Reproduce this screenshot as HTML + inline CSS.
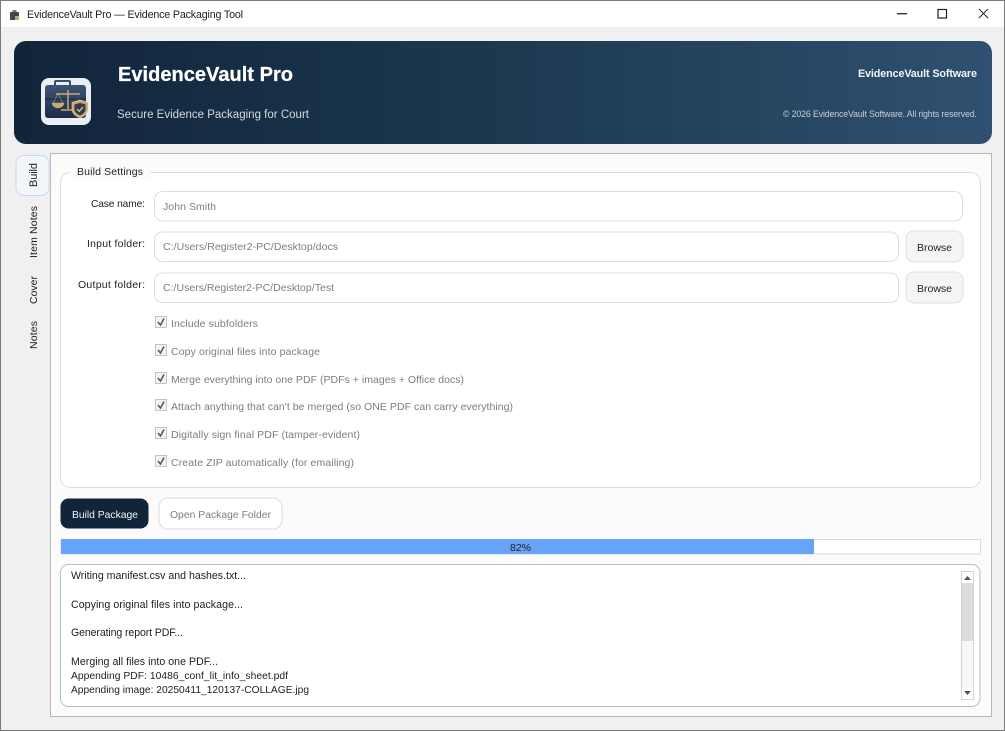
<!DOCTYPE html>
<html><head><meta charset="utf-8"><title>EvidenceVault Pro</title>
<style>
html,body{margin:0;padding:0;width:1005px;height:731px;overflow:hidden;background:#f0f0f0}
svg{display:block;filter:blur(.3px)}
text{font-family:"Liberation Sans",sans-serif;font-size:11px;fill:#222}
.g{fill:#7d7d7d}
.cb{fill:#f3f3f3;stroke:#c4c4c4}
.ck{fill:none;stroke:#5a5a5a;stroke-width:1.6}
.f{fill:#fff;stroke:#dedede}
.log{fill:#1e1e1e;font-size:10.6px}
</style></head><body>
<svg width="1005" height="731" viewBox="0 0 1005 731" xmlns="http://www.w3.org/2000/svg">
<defs>
<linearGradient id="hd" x1="0" x2="1" y1="0" y2="0"><stop offset="0" stop-color="#11243a"/><stop offset=".5" stop-color="#1c3950"/><stop offset="1" stop-color="#2f5070"/></linearGradient>
<linearGradient id="bc" x1="0" x2="0" y1="0" y2="1"><stop offset="0" stop-color="#3d5478"/><stop offset="1" stop-color="#1d2c48"/></linearGradient>
</defs>
<rect width="1005" height="731" fill="#f0f0f0"/>
<rect width="1005" height="27" fill="#fff"/>
<rect x="0.5" y="0.5" width="1004" height="730" fill="none" stroke="#7a7a7a"/>
<!-- title bar -->
<rect x="10" y="12" width="9" height="8" rx="1" fill="#3d4652"/><rect x="12.500" y="10" width="4" height="2" fill="#6b7480"/><rect x="15" y="16" width="4" height="4" fill="#b9a878"/>
<text x="27" y="18" textLength="216" style="font-size:10.700px">EvidenceVault Pro — Evidence Packaging Tool</text>
<rect x="897" y="13" width="10" height="1.400" fill="#333"/>
<rect x="938" y="9.500" width="8.500" height="8.500" fill="none" stroke="#222" stroke-width="1.200"/>
<path d="M979 9l9 9M988 9l-9 9" stroke="#333" stroke-width="1.100" fill="none"/>
<!-- header -->
<rect x="14" y="41" width="978" height="103" rx="12" fill="url(#hd)"/>
<rect x="41" y="78" width="50" height="47" rx="8" fill="#e9eff3"/>
<path d="M55 85v-3a1 1 0 0 1 1-1h13a1 1 0 0 1 1 1v3" fill="none" stroke="#3a4c6b" stroke-width="2"/>
<rect x="45" y="85" width="41" height="33" rx="3" fill="url(#bc)"/>
<path d="M45 99h41" stroke="#1c2a44" stroke-width="1"/>
<path d="M68 90v19M56 94h24M61 110h15" stroke="#c9a971" stroke-width="1.500" fill="none"/>
<path d="M52 103a6 5 0 0 0 12 0zM58 94l-5 9M58 94l5 9" fill="#c9a971" stroke="#c9a971" stroke-width=".5"/>
<path d="M80 100l8 2.500v6.500c0 4.500-3.500 7-8 9-4.500-2-8-4.500-8-9v-6.500z" fill="#c9a662" stroke="#f0e0b0" stroke-width=".6"/>
<path d="M80 103l5.500 1.500v4.500c0 3-2.500 5-5.500 6.500-3-1.500-5.500-3.500-5.500-6.500v-4.500z" fill="#2b3b52"/>
<path d="M77 109l2.200 2.300 3.800-4.300" stroke="#d9bb7e" stroke-width="1.400" fill="none"/>
<text x="118" y="81" textLength="175" style="font-size:20px;font-weight:bold;fill:#fff;stroke:#fff;stroke-width:.25">EvidenceVault Pro</text>
<text x="117" y="118" textLength="192" style="font-size:11.500px;fill:#d3dbe2">Secure Evidence Packaging for Court</text>
<text x="858" y="77" textLength="119" style="font-size:10.800px;font-weight:bold;fill:#f0f4f7">EvidenceVault Software</text>
<text x="783" y="117" textLength="194" style="font-size:8.800px;fill:#c3ced8">© 2026 EvidenceVault Software. All rights reserved.</text>
<!-- side tabs -->
<rect x="50.500" y="153.500" width="941" height="563" fill="#fbfbfb" stroke="#b8b8b8"/>
<rect x="16" y="155.500" width="33" height="40" rx="8" fill="#f2f6fb" stroke="#c9daee"/>
<text transform="translate(37,187) rotate(-90)" textLength="24">Build</text>
<text transform="translate(37,258) rotate(-90)" textLength="52" style="font-size:10.500px">Item Notes</text>
<text transform="translate(37,304) rotate(-90)" textLength="28" style="font-size:10.500px">Cover</text>
<text transform="translate(37,349) rotate(-90)" textLength="28" style="font-size:10.500px">Notes</text>
<!-- group -->
<rect x="60.500" y="172.500" width="920" height="315" rx="10" fill="#fff" stroke="#dcdcdc"/>
<rect x="70" y="165" width="80" height="14" fill="#fbfbfb"/>
<text x="77" y="175" textLength="66" style="font-size:10.500px">Build Settings</text>
<text x="91" y="207" textLength="54" style="font-size:10.200px">Case name:</text>
<text x="87" y="247" textLength="58" style="font-size:10.500px">Input folder:</text>
<text x="78" y="288" textLength="67" style="font-size:10.500px">Output folder:</text>
<rect class="f" x="154.500" y="191.500" width="808" height="29.500" rx="8"/>
<rect class="f" x="154.500" y="232" width="744" height="29.500" rx="8"/>
<rect class="f" x="154.500" y="273" width="744" height="29.500" rx="8"/>
<text class="g" x="163" y="210" textLength="53" style="font-size:10.500px">John Smith</text>
<text class="g" x="163" y="250" textLength="175" style="font-size:10.500px">C:/Users/Register2-PC/Desktop/docs</text>
<text class="g" x="163" y="291" textLength="171" style="font-size:10.500px">C:/Users/Register2-PC/Desktop/Test</text>
<rect x="906" y="231" width="57" height="31" rx="8" fill="#f5f5f5" stroke="#e0e0e0"/>
<rect x="906" y="272" width="57" height="31" rx="8" fill="#f5f5f5" stroke="#e0e0e0"/>
<text x="917" y="251" textLength="35" style="font-size:10.500px">Browse</text>
<text x="917" y="292" textLength="35" style="font-size:10.500px">Browse</text>
<!-- checkboxes -->
<rect class="cb" x="155.500" y="316.500" width="11" height="11"/><path class="ck" d="M158 322l2.500 3 3.500-6.500"/>
<rect class="cb" x="155.500" y="344.500" width="11" height="11"/><path class="ck" d="M158 350l2.500 3 3.500-6.500"/>
<rect class="cb" x="155.500" y="372.500" width="11" height="11"/><path class="ck" d="M158 378l2.500 3 3.500-6.500"/>
<rect class="cb" x="155.500" y="399.500" width="11" height="11"/><path class="ck" d="M158 405l2.500 3 3.500-6.500"/>
<rect class="cb" x="155.500" y="427.500" width="11" height="11"/><path class="ck" d="M158 433l2.500 3 3.500-6.500"/>
<rect class="cb" x="155.500" y="455.500" width="11" height="11"/><path class="ck" d="M158 461l2.500 3 3.500-6.500"/>
<text class="g" x="171" y="327" textLength="87" style="font-size:10.500px">Include subfolders</text>
<text class="g" x="171" y="355" textLength="149" style="font-size:10.500px">Copy original files into package</text>
<text class="g" x="171" y="383" textLength="293" style="font-size:10.500px">Merge everything into one PDF (PDFs + images + Office docs)</text>
<text class="g" x="171" y="410" textLength="342" style="font-size:10.500px">Attach anything that can't be merged (so ONE PDF can carry everything)</text>
<text class="g" x="171" y="438" textLength="189" style="font-size:10.500px">Digitally sign final PDF (tamper-evident)</text>
<text class="g" x="171" y="466" textLength="183" style="font-size:10.500px">Create ZIP automatically (for emailing)</text>
<!-- buttons -->
<rect x="60.500" y="498.500" width="88" height="30" rx="8" fill="#10243a"/>
<text x="72" y="518" textLength="66" style="font-size:10.400px;fill:#f2f4f6">Build Package</text>
<rect x="159" y="498" width="123" height="31" rx="9" fill="#fff" stroke="#dcdcdc"/>
<text class="g" x="170" y="518" textLength="101" style="font-size:10.300px">Open Package Folder</text>
<!-- progress -->
<rect x="61" y="539.500" width="919.500" height="14.500" fill="#fff" stroke="#dcdcdc"/>
<rect x="61" y="539" width="753" height="15" fill="#66a3fb"/>
<text x="510" y="551" textLength="21" style="font-size:10.500px">82%</text>
<!-- log -->
<rect x="60.500" y="564.500" width="919.500" height="142" rx="8" fill="#fff" stroke="#a9c3d6"/>
<text class="log" x="71" y="579" textLength="175">Writing manifest.csv and hashes.txt...</text>
<text class="log" x="71" y="608" textLength="172">Copying original files into package...</text>
<text class="log" x="71" y="636" textLength="112">Generating report PDF...</text>
<text class="log" x="71" y="665" textLength="147">Merging all files into one PDF...</text>
<text class="log" x="71" y="679" textLength="217" style="font-size:10.300px">Appending PDF: 10486_conf_lit_info_sheet.pdf</text>
<text class="log" x="71" y="693" textLength="238" style="font-size:10.200px">Appending image: 20250411_120137-COLLAGE.jpg</text>
<!-- scrollbar -->
<rect x="961.500" y="571.500" width="12" height="128" fill="#f7f7f7" stroke="#d4d4d4"/>
<rect x="962" y="583" width="11" height="58" fill="#dcdcdc"/>
<rect x="962" y="572" width="11" height="11" fill="#fff"/>
<rect x="962" y="688" width="11" height="11" fill="#fff"/>
<path d="M964 580h7l-3.500-4z" fill="#555"/>
<path d="M964 691h7l-3.500 4z" fill="#555"/>
</svg>
</body></html>
